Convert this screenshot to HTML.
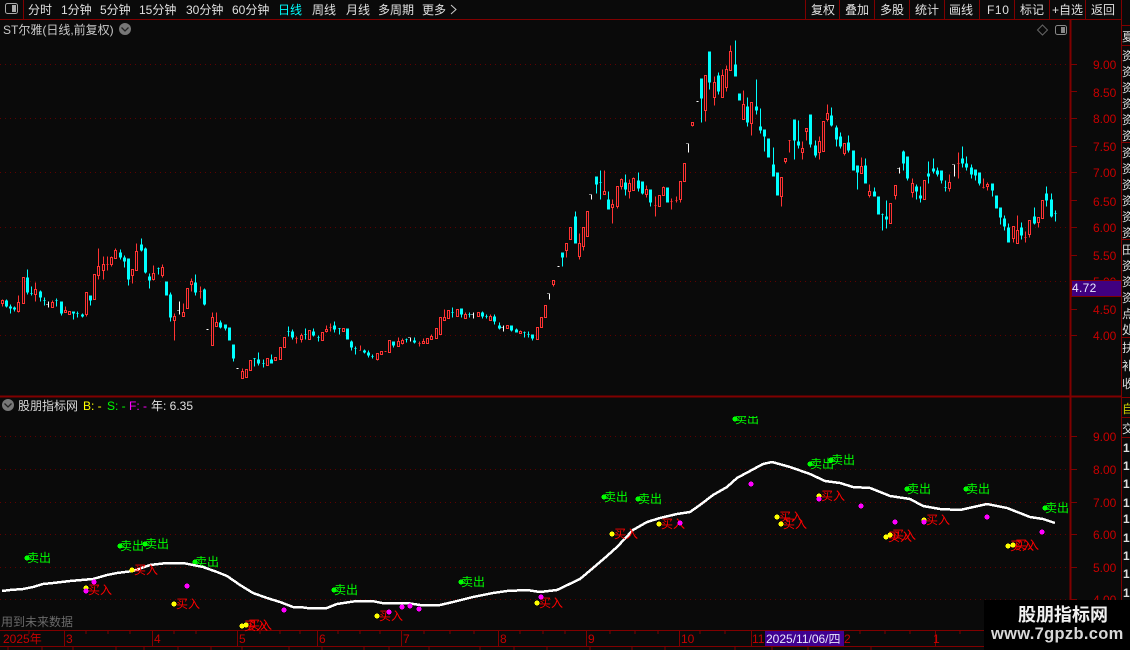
<!DOCTYPE html>
<html><head><meta charset="utf-8"><style>
html,body{margin:0;padding:0;background:#0a0a0a;width:1130px;height:650px;overflow:hidden}
svg{display:block;position:absolute;left:0;top:0}
text{font-family:"Liberation Sans","WenQuanYi Zen Hei","Noto Sans CJK SC",sans-serif;font-size:12px}
.m{fill:#e0e0e0}.a{fill:#c80000}.s{fill:#00ff00}.b{fill:#ff0000}
</style></head><body>
<svg width="1130" height="650" viewBox="0 0 1130 650">
<rect width="1130" height="650" fill="#0a0a0a"/>
<!-- grid -->
<g stroke="#600000" stroke-dasharray="1 4" fill="none">
<path d="M0 64.5H1070M0 118.5H1070M0 172.5H1070M0 227.5H1070M0 281.5H1070M0 335.5H1070"/>
<path d="M0 436.5H1070M0 469.5H1070M0 502.5H1070M0 534.5H1070M0 567.5H1070M0 599.5H1070"/>
</g>
<!-- frame -->
<g stroke="#800000" fill="none" shape-rendering="crispEdges">
<path d="M0 19.5H1121M23.5 0V19M805.5 0V19M839.5 0V19M874.5 0V19M909.5 0V19M944.5 0V19M979.5 0V19M1014.5 0V19M1049.5 0V19M1085.5 0V19M1121.5 0V650"/>
<path d="M1121 25.5H1130M1121 45.5H1130M1121 142.5H1130M1121 239.5H1130M1121 337.5H1130M1121 397.5H1130M1121 417.5H1130M1121 437.5H1130"/>
<path d="M1070.5 20V630" stroke-width="2"/>
<path d="M0 396.5H1121" stroke-width="2"/>
<path d="M1071 64.5h6M1071 91.5h6M1071 118.5h6M1071 146.5h6M1071 172.5h6M1071 200.5h6M1071 227.5h6M1071 255.5h6M1071 309.5h6M1071 335.5h6M1071 436.5h6M1071 469.5h6M1071 502.5h6M1071 534.5h6M1071 567.5h6M1071 599.5h6"/>
<path d="M0 630.5H984M0 646.5H984"/>
<path d="M64.5 631V646M152.5 631V646M237.5 631V646M317.5 631V646M401.5 631V646M498.5 631V646M586.5 631V646M679.5 631V646M751.5 631V646M935.5 631V646"/>
<path d="M29 631v3M86 631v3M108 631v3M130 631v3M174 631v3M196 631v3M260 631v3M280 631v3M300 631v3M338 631v3M360 631v3M380 631v3M424 631v3M450 631v3M474 631v3M520 631v3M543 631v3M565 631v3M610 631v3M635 631v3M658 631v3M700 631v3M725 631v3M860 631v3M885 631v3M910 631v3M960 631v3"/>
<path d="M8 646v4M42 646v4M73 646v4M116 646v4M144 646v4M178 646v4M211 646v4M242 646v4M289 646v4M322 646v4M364 646v4M389 646v4M429 646v4M480 646v4M514 646v4M547 646v4M590 646v4M632 646v4M665 646v4M735 646v4M772 646v4M808 646v4M871 646v4"/>
</g>
<!-- toolbar -->
<rect x="5.5" y="3.5" width="12" height="10" rx="2" fill="none" stroke="#aaa"/>
<rect x="12" y="5" width="4" height="7" fill="#aaa"/>
<g class="m">
<text class="m" x="28" y="14">分时</text>
<text class="m" x="61" y="14">1分钟</text>
<text class="m" x="100" y="14">5分钟</text>
<text class="m" x="139" y="14">15分钟</text>
<text class="m" x="186" y="14">30分钟</text>
<text class="m" x="232" y="14">60分钟</text>
<text x="278" y="14" fill="#00ffff">日线</text>
<text class="m" x="312" y="14">周线</text>
<text class="m" x="346" y="14">月线</text>
<text class="m" x="378" y="14">多周期</text>
<text class="m" x="422" y="14">更多</text>
<path d="M451 5l5 4.5-5 4.5" fill="none" stroke="#ccc"/>
<text class="m" x="811" y="14">复权</text>
<text class="m" x="845" y="14">叠加</text>
<text class="m" x="880" y="14">多股</text>
<text class="m" x="915" y="14">统计</text>
<text class="m" x="949" y="14">画线</text>
<text class="m" x="987" y="14" letter-spacing=".6">F10</text>
<text class="m" x="1020" y="14">标记</text>
<text class="m" x="1052" y="14">+自选</text>
<text class="m" x="1091" y="14">返回</text>
</g>
<!-- title -->
<text x="3" y="34" fill="#c8c8c8">ST尔雅(日线,前复权)</text>
<circle cx="125" cy="29" r="6" fill="#777"/><path d="M121.5 27.5l3.5 3.5 3.5-3.5" fill="none" stroke="#222" stroke-width="1.3"/>
<path d="M1042.500 25l5 5-5 5-5-5z" fill="none" stroke="#666"/>
<rect x="1055.500" y="25.500" width="11" height="9" rx="2" fill="none" stroke="#888"/><rect x="1061" y="27" width="4" height="6" fill="#888"/>
<!-- axis labels -->
<g class="a">
<text class="a" x="1093" y="69">9.00</text><text class="a" x="1093" y="97">8.50</text><text class="a" x="1093" y="123">8.00</text><text class="a" x="1093" y="151">7.50</text><text class="a" x="1093" y="177">7.00</text><text class="a" x="1093" y="206">6.50</text><text class="a" x="1093" y="232">6.00</text><text class="a" x="1093" y="260">5.50</text><text class="a" x="1093" y="286">5.00</text><text class="a" x="1093" y="314">4.50</text><text class="a" x="1093" y="340">4.00</text>
<text class="a" x="1093" y="441">9.00</text><text class="a" x="1093" y="474">8.00</text><text class="a" x="1093" y="507">7.00</text><text class="a" x="1093" y="539">6.00</text><text class="a" x="1093" y="572">5.00</text><text class="a" x="1093" y="604">4.00</text>
</g>
<rect x="1071.500" y="280.500" width="50" height="16" fill="#400080" stroke="#800000"/>
<text x="1072" y="292" fill="#e8e8ff" letter-spacing=".3">4.72</text>
<!-- right column -->
<g fill="#dcdcdc">
<text x="1122" y="41" fill="#dcdcdc">夏</text>
<text x="1122" y="60">资</text><text x="1122" y="76">资</text><text x="1122" y="92">资</text><text x="1122" y="108">资</text><text x="1122" y="124">资</text><text x="1122" y="140">资</text>
<text x="1122" y="157">资</text><text x="1122" y="173">资</text><text x="1122" y="189">资</text><text x="1122" y="205">资</text><text x="1122" y="221">资</text><text x="1122" y="237">资</text>
<text x="1122" y="254">田</text><text x="1122" y="270">资</text><text x="1122" y="286">资</text><text x="1122" y="302">资</text><text x="1122" y="318">点</text><text x="1122" y="334">处</text>
<text x="1122" y="352">扶</text><text x="1122" y="370">补</text><text x="1122" y="388">收</text>
<text x="1122" y="413" fill="#c8c800">自</text><text x="1122" y="433">交</text>
<g font-weight="bold" fill="#e0e0e0"><text x="1123" y="452">1</text><text x="1123" y="470">1</text><text x="1123" y="488">1</text><text x="1123" y="507">1</text><text x="1123" y="523">1</text><text x="1123" y="542">1</text><text x="1123" y="560">1</text><text x="1123" y="578">1</text><text x="1123" y="597">1</text></g>
</g>
<!-- candles -->
<g transform="translate(.5 .5)" fill="none" shape-rendering="crispEdges">
<path stroke="#00ffff" d="M6 299V307M10 304V313M14 306V311M27 269V294M31 286V295M30 293h2M40 290V301M44 297V305M43 300h2M56 298V306M55 300h2M61 301V315M73 311V319M77 311V317M76 313h2M82 313V317M90 295V305M120 249V259M124 255V267M128 258V285M141 238V251M145 247V273M149 273V288M158 267V274M157 268h2M170 292V321M195 274V295M204 288V305M220 320V328M225 324V330M233 344V361M254 358V366M253 358h2M258 352V365M263 359V367M262 363h2M271 354V363M288 326V336M287 331h2M292 329V339M305 328V339M304 334h2M313 328V336M318 335V341M317 337h2M334 321V332M339 328V334M338 328h2M351 340V350M355 346V354M354 348h2M364 349V353M368 350V357M372 354V358M371 356h2M393 341V347M406 338V342M405 339h2M414 337V343M452 307V317M451 312h2M461 308V317M469 312V317M468 314h2M482 311V318M486 314V318M485 316h2M494 314V324M499 322V329M511 325V331M516 328V332M524 331V337M523 332h2M528 331V337M527 334h2M532 334V340M562 252V266M575 211V243M596 176V193M600 170V199M599 182h2M608 191V209M625 174V195M638 172V191M642 181V194M650 189V206M701 78V122M709 51V89M718 72V94M735 40V76M747 97V126M756 79V114M760 108V133M764 129V151M773 147V176M794 119V159M798 120V148M810 114V147M815 140V157M831 107V126M836 125V146M840 132V148M848 135V152M857 165V189M865 158V183M874 187V196M882 213V230M881 214h2M886 200V228M903 150V170M907 156V180M916 184V199M920 186V202M928 161V183M933 158V173M937 167V176M941 170V183M945 180V191M944 187h2M962 146V167M966 156V170M971 164V178M975 169V180M979 172V185M992 183V196M1000 207V224M1004 215V230M1008 223V242M1021 222V239M1034 207V224M1046 186V206M1051 193V217M1055 210V221M1054 213h2"/>
<path stroke="#00ffff" stroke-width="3" d="M6 300V306M10 306V308M14 307V309M27 277V292M40 291V297M61 301V313M73 311V313M82 314V316M90 295V300M120 252V257M124 257V261M128 258V279M141 244V250M145 248V272M149 276V280M166 281V295M170 294V317M195 282V292M204 289V304M220 322V327M225 324V328M229 327V340M233 344V358M258 359V363M271 359V363M292 331V337M313 331V335M334 325V329M347 328V339M351 341V347M364 350V352M368 352V355M393 341V345M414 340V342M461 308V314M482 312V316M494 316V321M499 325V328M511 325V330M516 329V332M532 334V338M562 252V257M575 216V243M596 176V184M608 199V209M625 182V189M638 180V188M642 181V193M650 189V202M667 187V202M701 78V98M709 51V82M718 75V91M735 64V76M739 93V100M747 106V122M756 106V110M760 126V130M764 129V136M768 138V157M773 164V176M777 172V195M794 119V140M798 141V145M810 114V144M815 145V155M831 115V125M836 127V139M840 136V146M848 142V150M853 150V170M857 165V172M865 165V183M874 191V196M878 196V214M886 216V219M903 151V163M907 156V178M916 186V191M920 195V198M928 173V176M933 168V171M937 170V174M941 170V180M962 158V163M966 163V167M971 167V174M975 169V175M979 172V183M992 183V190M996 195V208M1000 207V217M1004 218V226M1008 227V242M1021 227V235M1034 216V223M1046 193V200M1051 199V216"/>
<path stroke="#ff3333" d="M2 299V306M18 295V312M35 282V301M52 300V307M65 306V312M86 292V316M98 248V279M103 256V279M107 256V270M106 264h2M111 256V266M115 248V258M132 269V283M136 243V270M153 265V280M162 264V277M174 313V340M183 303V316M191 278V291M200 286V298M199 291h2M212 312V345M216 312V326M242 368V378M296 336V343M295 338h2M301 333V342M326 325V332M330 323V331M329 327h2M360 345V350M359 350h1M377 353V360M385 351h-1M384 351h2M398 337V346M402 338V344M419 341V346M418 343h2M423 338V343M431 334V339M444 309V320M465 312V318M490 314V320M520 330V333M553 280V286M566 243V257M579 233V259M583 227V250M604 170V194M612 199V223M617 186V208M621 178V189M629 179V198M633 177V190M646 185V197M655 196V216M654 205h2M663 186V195M671 198V209M670 201h2M676 196V202M675 200h2M680 181V202M692 122V126M705 75V121M714 76V105M722 69V97M726 65V91M730 45V70M743 90V119M751 102V135M781 177V206M785 158V163M789 140V152M788 140h2M802 141V159M806 128V140M819 136V159M827 104V121M844 143V155M861 157V173M869 184V197M895 185V199M912 178V197M949 174V191M958 152V178M957 163h2M983 178V188M982 187h2M987 182V190M1013 226V242M1017 215V243M1025 231V242M1024 237h2M1029 220V237M1038 217V227"/>
<path stroke="#ff3333" fill="#0a0a0a" d="M1 300h2V303h-2zM17 302h2V311h-2zM22 277h2V303h-2zM34 289h2V294h-2zM51 302h2V307h-2zM64 310h2V312h-2zM68 311h2V314h-2zM85 292h2V314h-2zM93 274h2V299h-2zM97 266h2V275h-2zM102 264h2V270h-2zM110 257h2V264h-2zM114 250h2V258h-2zM131 269h2V275h-2zM135 251h2V270h-2zM152 273h2V279h-2zM161 267h2V275h-2zM173 316h2V320h-2zM182 312h2V316h-2zM186 288h2V308h-2zM190 281h2V284h-2zM211 317h2V345h-2zM215 322h2V326h-2zM241 371h2V378h-2zM245 369h2V377h-2zM249 360h2V370h-2zM266 358h2V365h-2zM274 357h2V360h-2zM279 347h2V359h-2zM283 337h2V347h-2zM300 335h2V339h-2zM308 330h2V339h-2zM321 332h2V340h-2zM325 329h2V331h-2zM342 328h2V331h-2zM376 353h2V359h-2zM380 351h2V354h-2zM388 340h2V352h-2zM397 341h2V346h-2zM401 340h2V343h-2zM422 341h2V343h-2zM426 338h2V343h-2zM430 336h2V339h-2zM435 328h2V338h-2zM439 317h2V334h-2zM443 317h2V320h-2zM447 310h2V318h-2zM456 309h2V316h-2zM464 314h2V318h-2zM477 312h2V316h-2zM489 316h2V320h-2zM506 325h2V328h-2zM519 331h2V333h-2zM536 327h2V339h-2zM540 317h2V327h-2zM544 305h2V317h-2zM552 280h2V284h-2zM565 243h2V250h-2zM569 227h2V239h-2zM578 243h2V256h-2zM582 227h2V246h-2zM586 211h2V236h-2zM603 191h2V194h-2zM611 204h2V207h-2zM616 186h2V206h-2zM620 179h2V186h-2zM628 183h2V191h-2zM632 178h2V190h-2zM645 189h2V194h-2zM658 195h2V206h-2zM662 187h2V195h-2zM679 181h2V199h-2zM683 163h2V181h-2zM691 122h2V125h-2zM704 75h2V110h-2zM713 82h2V97h-2zM721 75h2V97h-2zM725 69h2V87h-2zM729 51h2V70h-2zM742 104h2V119h-2zM750 102h2V123h-2zM780 177h2V196h-2zM784 158h2V161h-2zM801 148h2V152h-2zM805 128h2V131h-2zM818 141h2V152h-2zM822 121h2V151h-2zM826 113h2V119h-2zM843 143h2V153h-2zM860 166h2V173h-2zM868 191h2V195h-2zM889 203h2V223h-2zM894 185h2V195h-2zM911 183h2V192h-2zM923 180h2V199h-2zM948 182h2V188h-2zM986 184h2V186h-2zM1012 226h2V238h-2zM1016 230h2V243h-2zM1028 220h2V234h-2zM1037 217h2V222h-2zM1041 200h2V218h-2z"/>
<path stroke="#ffffff" d="M48 301V307M46 304h1M179 301V314M177 310h1M206 329h2M236 368h2M410 337V341M408 337h1M473 312V318M471 314h1M503 325V331M501 327h1M549 293V299M547 293h1M557 266h2M591 194V199M589 194h1M688 143V152M686 143h1M696 101h2M899 167V173M897 168h1M954 164V176M952 164h1"/>
</g>
<!-- indicator header -->
<circle cx="8" cy="405" r="6" fill="#777"/><path d="M4.500 403.500l3.500 3.500 3.500-3.500" fill="none" stroke="#222" stroke-width="1.3"/>
<text x="18" y="410" fill="#d8d8d8">股朋指标网</text>
<text x="83" y="410" fill="#ffff00">B: -</text>
<text x="107" y="410" fill="#00ff00">S: -</text>
<text x="129" y="410" fill="#ff00ff">F: -</text>
<text x="151" y="410" fill="#e0e0e0">年: 6.35</text>
<!-- sell labels -->
<svg x="0" y="416" width="1070" height="214" viewBox="0 416 1070 214" overflow="hidden">
<g>
<text class="s" x="27" y="562" textLength="24">卖出</text><text class="s" x="120" y="550" textLength="24">卖出</text><text class="s" x="145" y="548" textLength="24">卖出</text><text class="s" x="195" y="566" textLength="24">卖出</text><text class="s" x="334" y="594" textLength="24">卖出</text><text class="s" x="461" y="586" textLength="24">卖出</text><text class="s" x="604" y="501" textLength="24">卖出</text><text class="s" x="638" y="503" textLength="24">卖出</text><text class="s" x="735" y="423" textLength="24">卖出</text><text class="s" x="810" y="468" textLength="24">卖出</text><text class="s" x="831" y="464" textLength="24">卖出</text><text class="s" x="907" y="493" textLength="24">卖出</text><text class="s" x="966" y="493" textLength="24">卖出</text><text class="s" x="1045" y="512" textLength="24">卖出</text>
</g>
<g fill="#00ff00" shape-rendering="crispEdges"><circle cx="27" cy="558" r="2.500"/><circle cx="120" cy="546" r="2.500"/><circle cx="145" cy="544" r="2.500"/><circle cx="195" cy="562" r="2.500"/><circle cx="334" cy="590" r="2.500"/><circle cx="461" cy="582" r="2.500"/><circle cx="604" cy="497" r="2.500"/><circle cx="638" cy="499" r="2.500"/><circle cx="735" cy="419" r="2.500"/><circle cx="810" cy="464" r="2.500"/><circle cx="831" cy="460" r="2.500"/><circle cx="907" cy="489" r="2.500"/><circle cx="966" cy="489" r="2.500"/><circle cx="1045" cy="508" r="2.500"/></g>
</svg>
<!-- index line -->
<polyline fill="none" stroke="#ffffff" stroke-width="2.500" shape-rendering="crispEdges" points="2,591 10,590 23,589 33,587 43,584 53,583 70,581 93,579 107,575 117,573 133,571 150,565 167,563 183,563 203,567 217,572 227,576 240,585 253,593 267,598 280,602 293,607 300,607 307,608 327,608 337,604 350,602 357,601 372,601 382,603 407,603 420,605 440,605 453,602 473,597 493,593 507,591 527,590 540,592 557,590 580,579 593,568 607,556 617,547 633,530 647,522 660,518 677,514 690,512 700,505 713,495 727,487 737,478 750,471 763,464 772,462 790,467 810,474 825,481 840,483 853,487 870,488 890,496 910,499 923,506 940,509 960,510 987,504 1007,508 1030,517 1043,519 1055,523"/>
<!-- buy labels -->
<g>
<text class="b" x="88" y="594" textLength="24">买入</text><text class="b" x="134" y="574" textLength="24">买入</text><text class="b" x="176" y="608" textLength="24">买入</text><text class="b" x="244" y="630" textLength="24">买入</text><text class="b" x="248" y="629" textLength="24">买入</text><text class="b" x="379" y="620" textLength="24">买入</text><text class="b" x="539" y="607" textLength="24">买入</text><text class="b" x="614" y="538" textLength="24">买入</text><text class="b" x="661" y="528" textLength="24">买入</text><text class="b" x="779" y="521" textLength="24">买入</text><text class="b" x="783" y="528" textLength="24">买入</text><text class="b" x="821" y="500" textLength="24">买入</text><text class="b" x="888" y="541" textLength="24">买入</text><text class="b" x="892" y="539" textLength="24">买入</text><text class="b" x="926" y="524" textLength="24">买入</text><text class="b" x="1010" y="550" textLength="24">买入</text><text class="b" x="1015" y="549" textLength="24">买入</text>
</g>
<g fill="#ffff00" shape-rendering="crispEdges"><circle cx="86" cy="588" r="2.500"/><circle cx="132" cy="570" r="2.500"/><circle cx="174" cy="604" r="2.500"/><circle cx="242" cy="626" r="2.500"/><circle cx="246" cy="625" r="2.500"/><circle cx="377" cy="616" r="2.500"/><circle cx="537" cy="603" r="2.500"/><circle cx="612" cy="534" r="2.500"/><circle cx="659" cy="524" r="2.500"/><circle cx="777" cy="517" r="2.500"/><circle cx="781" cy="524" r="2.500"/><circle cx="819" cy="496" r="2.500"/><circle cx="886" cy="537" r="2.500"/><circle cx="890" cy="535" r="2.500"/><circle cx="924" cy="520" r="2.500"/><circle cx="1008" cy="546" r="2.500"/><circle cx="1013" cy="545" r="2.500"/></g>
<g fill="#ff00ff" shape-rendering="crispEdges"><circle cx="94" cy="582" r="2.500"/><circle cx="86" cy="591" r="2.500"/><circle cx="187" cy="586" r="2.500"/><circle cx="284" cy="610" r="2.500"/><circle cx="389" cy="612" r="2.500"/><circle cx="402" cy="607" r="2.500"/><circle cx="410" cy="606" r="2.500"/><circle cx="419" cy="609" r="2.500"/><circle cx="541" cy="597" r="2.500"/><circle cx="680" cy="523" r="2.500"/><circle cx="751" cy="484" r="2.500"/><circle cx="819" cy="499" r="2.500"/><circle cx="861" cy="506" r="2.500"/><circle cx="895" cy="522" r="2.500"/><circle cx="924" cy="522" r="2.500"/><circle cx="987" cy="517" r="2.500"/><circle cx="1042" cy="532" r="2.500"/></g>
<text x="1" y="626" fill="#6a6a6a">用到未来数据</text>
<!-- date axis -->
<g>
<text class="a" x="3" y="643">2025年</text><text class="a" x="66" y="643">3</text><text class="a" x="154" y="643">4</text><text class="a" x="239" y="643">5</text><text class="a" x="319" y="643">6</text><text class="a" x="403" y="643">7</text><text class="a" x="500" y="643">8</text><text class="a" x="588" y="643">9</text><text class="a" x="681" y="643">10</text><text class="a" x="752" y="643">11</text><text class="a" x="844" y="643">2</text><text class="a" x="933" y="643">1</text>
</g>
<rect x="765" y="631" width="79" height="15" fill="#400090"/>
<text x="766" y="643" fill="#e8e8ff">2025/11/06/四</text>
<!-- watermark -->
<rect x="984" y="600" width="146" height="50" fill="#000"/>
<text x="1018" y="621" fill="#f0f0f0" font-weight="bold" style="font-size:18px">股朋指标网</text>
<text x="991" y="639" fill="#d8d8d8" font-weight="bold" style="font-size:16.500px;letter-spacing:.3px">www.7gpzb.com</text>
</svg>
</body></html>
